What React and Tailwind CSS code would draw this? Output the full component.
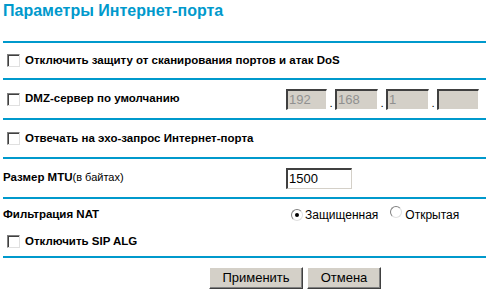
import React from "react";

const Line = () => <div className="h-[2px] bg-[#0099cc] ml-[3px]" />;

const Check = () => (
  <span className="inline-block w-[13px] h-[13px] shrink-0 bg-white border border-t-[#808080] border-l-[#808080] border-b-[#e0e0e0] border-r-[#e0e0e0] shadow-[inset_1px_1px_0_#404040]" />
);

const Radio = ({ checked }) => (
  <span className="relative inline-block w-[12px] h-[12px] shrink-0 rounded-full bg-white border border-t-[#808080] border-l-[#808080] border-b-[#e0e0e0] border-r-[#e0e0e0]">
    {checked && (
      <span className="absolute left-[3px] top-[3px] w-[4px] h-[4px] rounded-full bg-black" />
    )}
  </span>
);

const IpBox = ({ v, w }) => (
  <div
    className={`h-[21px] ${w} bg-[#d4d0c8] border-t-2 border-l-2 border-t-[#404040] border-l-[#404040] border-b border-r border-b-[#ffffff] border-r-[#ffffff] text-[13px] leading-[17px] font-normal text-[#909090] pl-[1px]`}
  >
    {v}
  </div>
);

export default function App() {
  return (
    <div
      className="w-[486px] h-[292px] bg-white overflow-hidden text-black"
      style={{ fontFamily: '"Liberation Sans", Arial, sans-serif' }}
    >
      <div className="h-[41px] pl-[3px] pt-[1px] text-[16px] font-bold text-[#0099cc] leading-[20px]">
        Параметры Интернет-порта
      </div>
      <Line />
      <div className="h-[35px] flex items-center pl-[7px] gap-[5px] text-[11.5px] font-bold">
        <Check />
        <span>Отключить защиту от сканирования портов и атак DoS</span>
      </div>
      <Line />
      <div className="h-[38px] flex items-center pl-[7px] text-[11.5px] font-bold">
        <div className="flex items-center gap-[5px] w-[279px]">
          <Check />
          <span>DMZ-сервер по умолчанию</span>
        </div>
        <div className="flex items-end">
          <IpBox v="192" w="w-[41px]" />
          <span className="w-[8px] text-center font-normal leading-[14px]">.</span>
          <IpBox v="168" w="w-[43px]" />
          <span className="w-[8px] text-center font-normal leading-[14px]">.</span>
          <IpBox v="1" w="w-[43px]" />
          <span className="w-[8px] text-center font-normal leading-[14px]">.</span>
          <IpBox v="" w="w-[42px]" />
        </div>
      </div>
      <Line />
      <div className="h-[37px] flex items-center pl-[7px] gap-[5px] text-[11.5px] font-bold">
        <Check />
        <span>Отвечать на эхо-запрос Интернет-порта</span>
      </div>
      <Line />
      <div className="h-[38px] flex items-center pl-[3px] text-[11.5px]">
        <div className="w-[283px]">
          <span className="font-bold">Размер MTU</span>
          <span className="text-[11px]">(в байтах)</span>
        </div>
        <div className="h-[21px] w-[66px] bg-white border-t-2 border-l-2 border-t-[#404040] border-l-[#404040] border-b border-r border-b-[#d4d0c8] border-r-[#d4d0c8] text-[13px] leading-[17px] pl-[1px]">
          1500
        </div>
      </div>
      <Line />
      <div className="h-[57px] text-[11.5px] pt-[9px]">
        <div className="flex items-center h-[14px] pl-[3px]">
          <span className="w-[288px] font-bold">Фильтрация NAT</span>
          <Radio checked />
          <span className="ml-[2px] text-[12px]">Защищенная</span>
          <span className="ml-[12px]"><Radio /></span>
          <span className="ml-[3px] text-[12px]">Открытая</span>
        </div>
        <div className="flex items-center gap-[5px] pl-[7px] mt-[11px] font-bold">
          <Check />
          <span>Отключить SIP ALG</span>
        </div>
      </div>
      <Line />
      <div className="flex pl-[209px] gap-[4px] pt-[9px]">
        <button className="h-[22px] w-[94px] bg-[#d4d0c8] border border-t-white border-l-white border-b-[#404040] border-r-[#404040] shadow-[inset_-1px_-1px_0_#808080] text-[13px] leading-[18px]">
          Применить
        </button>
        <button className="h-[22px] w-[74px] bg-[#d4d0c8] border border-t-white border-l-white border-b-[#404040] border-r-[#404040] shadow-[inset_-1px_-1px_0_#808080] text-[13px] leading-[18px]">
          Отмена
        </button>
      </div>
    </div>
  );
}
